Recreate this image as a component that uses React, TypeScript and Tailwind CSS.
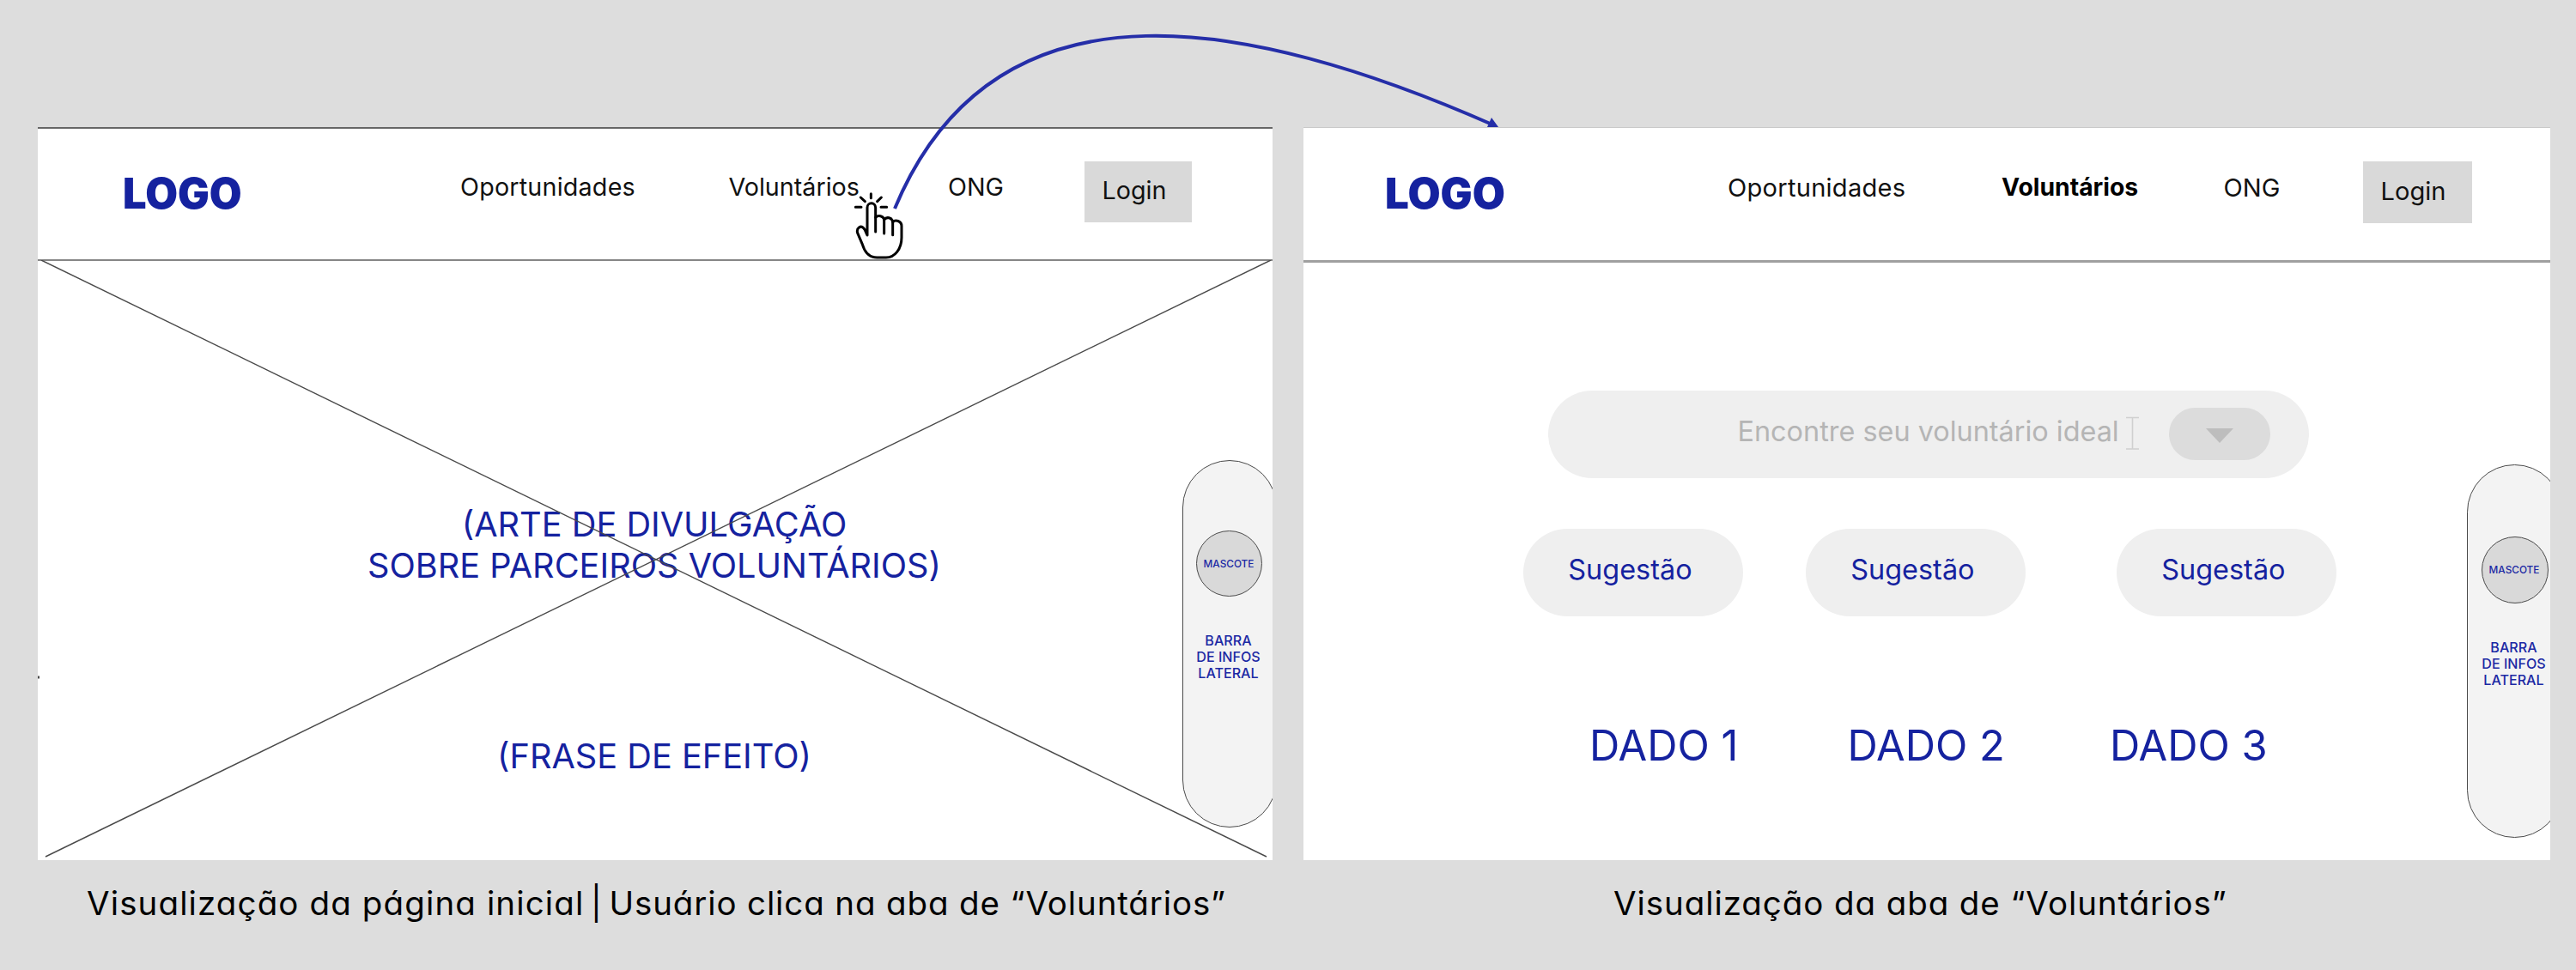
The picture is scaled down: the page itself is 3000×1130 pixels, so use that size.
const BLUE = "text-[#15229f]";

function Sidebar({ className, circle, label }: { className: string; circle: string; label: string }) {
  return (
    <aside
      className={`absolute flex flex-col items-center rounded-full border-[1.5px] border-[#4a4a4a] bg-[#f3f3f3] font-medium text-[#1c29a4] ${className}`}
    >
      <div className={`flex shrink-0 items-center justify-center rounded-full border-[1.5px] border-[#4a4a4a] bg-[#d9d9d9] ${circle}`}>
        <span className="-ml-px pt-[3px] text-[11.8px] leading-none">MASCOTE</span>
      </div>
      <p className={`-ml-[2px] text-center text-[16.1px] leading-[19px] ${label}`}>
        BARRA
        <br />
        DE INFOS
        <br />
        LATERAL
      </p>
    </aside>
  );
}

function HomeFrame() {
  return (
    <section className="w-[1438px]">
      <div className="relative h-[854px] overflow-hidden bg-white">
        <header className="grid h-[156px] grid-cols-[393px_313.4px_254.6px_159.5px_125px] items-start border-t-2 border-b-2 border-t-[#666] border-b-[#868686] pl-[99px] text-[28.7px] leading-none text-[#111]">
          <span className={`mt-[52px] text-[48.8px] font-black ${BLUE}`}>LOGO</span>
          <span className="mt-[54px] tracking-[0.2px]">Oportunidades</span>
          <span className="mt-[54px] -ml-px">Voluntários</span>
          <span className="mt-[54px]">ONG</span>
          <span className="mt-[38px] h-[71px] bg-[#d9d9d9] pt-[20px] pl-[20px]">Login</span>
        </header>
        <div className={`-ml-[2px] flex flex-col items-center gap-[174px] pt-[283px] text-center text-[39.7px] leading-[48px] ${BLUE}`}>
          <p>
            (ARTE DE DIVULGAÇÃO
            <br />
            SOBRE PARCEIROS VOLUNTÁRIOS)
          </p>
          <p>(FRASE DE EFEITO)</p>
        </div>
        <svg className="absolute top-[155px] left-0" width="1438" height="699" fill="none" stroke="#4a4a4a" strokeWidth="1.4">
          <path d="M4 0 1431 695M1436 0 9 695" />
          <path d="M0 486h2" strokeWidth="3" />
        </svg>
        <Sidebar
          className="top-[387.5px] left-[1332.5px] h-[428.5px] w-[110px]"
          circle="mt-[81px] size-[77px]"
          label="mt-[42px]"
        />
      </div>
      <p className="mt-[31px] ml-[57px] text-[38.5px] leading-none tracking-[0.87px] whitespace-nowrap text-black [font-feature-settings:'cv11']">
        <span className="tracking-[1.12px]">Visualização da página inicial</span>
        <span className="-mx-[4px]"> | </span>
        Usuário clica na aba de “Voluntários”
      </p>
    </section>
  );
}

function VolunteersFrame() {
  return (
    <section className="w-[1452px]">
      <div className="relative h-[854px] overflow-hidden bg-white">
        <header className="grid h-[158px] grid-cols-[399px_319px_258.5px_162.5px_126.5px] items-start border-t border-b-3 border-t-[#c8c8c8] border-b-[#a0a0a0] pl-[95px] text-[29.1px] leading-none text-[#111]">
          <span className={`mt-[52px] text-[49.2px] font-black ${BLUE}`}>LOGO</span>
          <span className="mt-[55px] tracking-[0.25px]">Oportunidades</span>
          <span className="mt-[55px] text-[28.3px] font-bold text-black">Voluntários</span>
          <span className="mt-[55px]">ONG</span>
          <span className="mt-[39px] h-[72px] bg-[#d9d9d9] pt-[20px] pl-[20.5px]">Login</span>
        </header>
        <div className="mt-[149px] ml-[284.5px] grid h-[102px] w-[886px] grid-cols-[221px_450px_52.5px_118px] items-start rounded-full bg-[#efefef]">
          <span />
          <span className="mt-[32px] text-[32.4px] leading-none whitespace-nowrap text-[#b5b5b5]">Encontre seu voluntário ideal</span>
          <svg className="mt-[30px] ml-[1px]" width="17" height="40" fill="none" stroke="#d0d0d0" strokeWidth="1.6">
            <path d="M1 1.5h15M1 38h15M8.5 1.5V38" />
          </svg>
          <span className="mt-[19.5px] flex h-[61px] items-center justify-center rounded-full bg-[#dcdcdc]">
            <svg className="mt-[5px]" width="32" height="17" fill="#bdbdbd">
              <path d="M0 0h32L16 17z" />
            </svg>
          </span>
        </div>
        <div className={`mt-[59px] ml-[256.3px] grid grid-cols-[328.9px_362px_256px] text-[32.45px] leading-none ${BLUE}`}>
          {[1, 2, 3].map((n) => (
            <span key={n} className="h-[102px] w-[256px] rounded-full bg-[#efefef] pt-[32px] pl-[52px]">
              Sugestão
            </span>
          ))}
        </div>
        <div className={`mt-[127px] ml-[333px] grid grid-cols-[300.5px_305.5px_200px] text-[48.8px] leading-none whitespace-nowrap ${BLUE}`}>
          <span>DADO 1</span>
          <span>DADO 2</span>
          <span>DADO 3</span>
        </div>
        <Sidebar
          className="top-[393px] left-[1355px] h-[435px] w-[111px]"
          circle="mt-[82.5px] size-[78px]"
          label="mt-[42.5px]"
        />
      </div>
      <p className="mt-[31px] ml-[361px] text-[38.5px] leading-none tracking-[0.92px] whitespace-nowrap text-black [font-feature-settings:'cv11']">
        Visualização da aba de “Voluntários”
      </p>
    </section>
  );
}

function ClickHand() {
  return (
    <svg
      className="absolute top-[210px] left-[980px]"
      width="90"
      height="100"
      viewBox="0 0 270 300"
      fill="none"
      stroke="#000"
      strokeWidth="9"
      strokeLinecap="round"
      strokeLinejoin="round"
    >
      <path d="M49 94h20M67 60l15 14M103 47v15M139 60l-14 14M138 94h20" />
      <path
        fill="#fff"
        d="M90 192V95a14.500 14.500 0 0 1 29 0V130C128 121 146 124 149 138C157 126 177 130 179 146C188 136 210 142 210 160V200C210 240 186 270 156 270H124C96 270 80 248 73 224L56 184C51 166 68 157 77 167C85 175 85 184 90 192Z"
      />
      <path d="M119 130v50M149 138v48M179 146v45" />
    </svg>
  );
}

export default function App() {
  return (
    <main className="relative flex h-[1130px] w-[3000px] items-start gap-[36px] overflow-hidden bg-[#ddd] pt-[148px] pl-[44px] font-[Inter,sans-serif]">
      <HomeFrame />
      <VolunteersFrame />
      <svg className="absolute top-0 left-0" width="1800" height="300" fill="none">
        <path d="M1042 243C1162 -45 1470 27 1740 146" stroke="#252ea8" strokeWidth="4" />
        <path d="M1737 137l8 11h-13z" fill="#252ea8" />
      </svg>
      <ClickHand />
    </main>
  );
}
